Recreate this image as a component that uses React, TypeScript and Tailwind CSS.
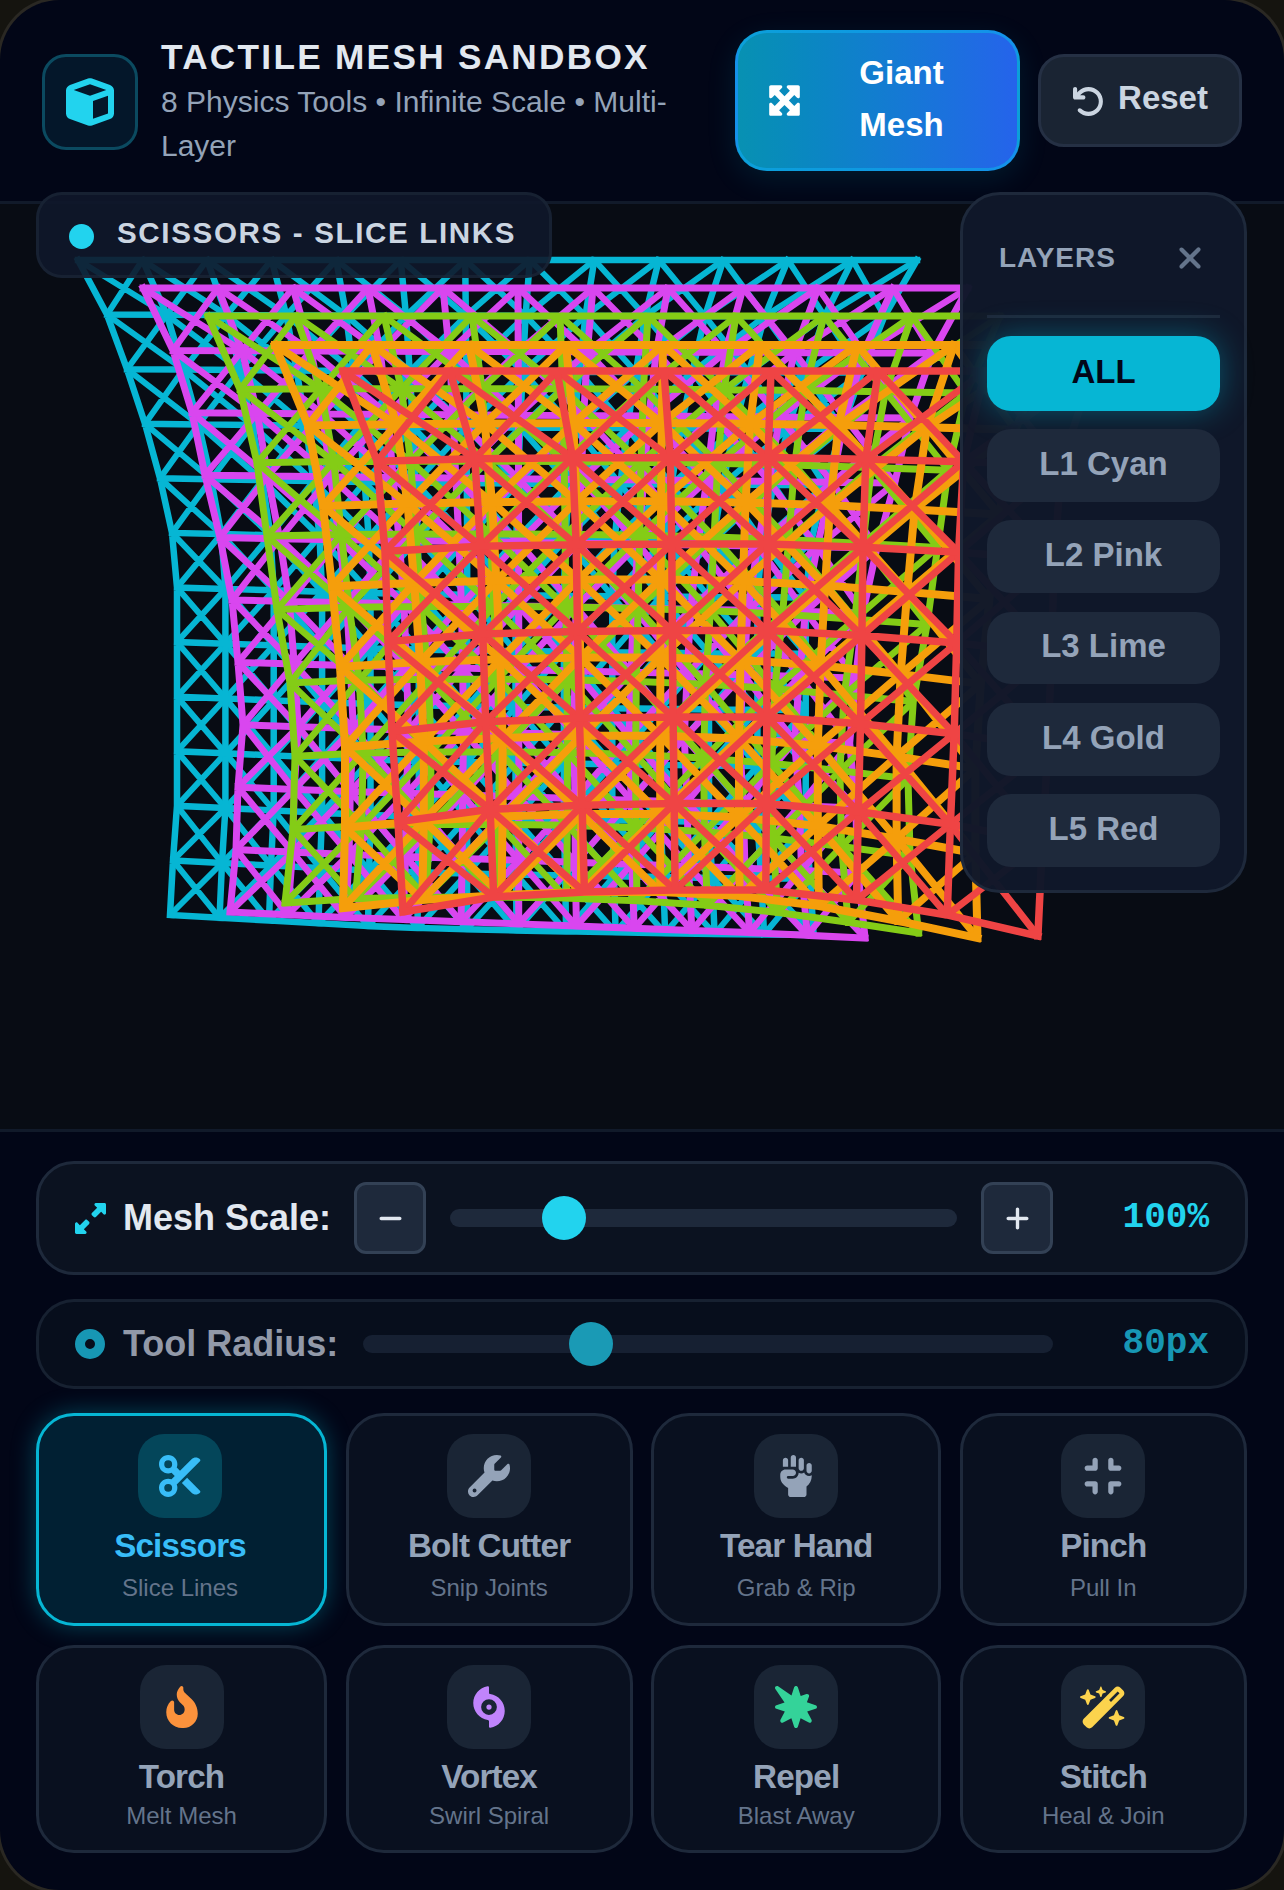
import React from 'react';
import {
  FaCube, FaMaximize, FaArrowRotateLeft, FaUpRightAndDownLeftFromCenter, FaScissors, FaWrench,
  FaHandFist, FaCompress, FaFireFlameCurved, FaBurst, FaHurricane, FaWandMagicSparkles, FaXmark, FaMinus, FaPlus,
} from 'react-icons/fa6';

interface MeshLayer {
  color: string;
  frame: number;
  brace: number;
  cols: number;
  x0: number;
  x1: number;
  y0: number;
  cx: number;
  left: number[];
  bottom: number[];
}

// measured off the picture: left edge per row, bottom edge per column fraction
const LAYERS: MeshLayer[] = [
  {
    color: '#06b6d4', frame: 6.5, brace: 6, cols: 13, x0: 78, x1: 917, y0: 260, cx: 473,
    left: [78, 107, 127, 145, 160, 172, 177, 177, 177, 177, 177, 173, 170],
    bottom: [915, 921, 927, 930, 932, 934, 935],
  },
  {
    color: '#d946ef', frame: 7, brace: 6.5, cols: 11, x0: 143, x1: 968, y0: 288, cx: 521,
    left: [143, 173, 192, 205, 220, 232, 238, 243, 238, 236, 230],
    bottom: [912, 917, 921, 925, 929, 933, 938],
  },
  {
    color: '#84cc16', frame: 7, brace: 6.5, cols: 9, x0: 208, x1: 1000, y0: 316, cx: 593,
    left: [208, 240, 257, 267, 277, 290, 295, 293, 285],
    bottom: [903, 898, 897, 897, 899, 903, 910, 921, 933],
  },
  {
    color: '#f59e0b', frame: 8, brace: 7.5, cols: 8, x0: 275, x1: 1051, y0: 345, cx: 648,
    left: [275, 308, 323, 332, 340, 345, 345, 343],
    bottom: [908, 900, 895, 892, 892, 896, 906, 921, 938],
  },
  {
    color: '#ef4444', frame: 7.5, brace: 7, cols: 7, x0: 343, x1: 1092, y0: 371, cx: 737,
    left: [343, 377, 385, 388, 392, 398, 403],
    bottom: [912, 897, 892, 890, 890, 900, 915, 936],
  },
];

function sample(values: number[], t: number) {
  const p = t * (values.length - 1);
  const i = Math.min(Math.floor(p), values.length - 2);
  return values[i] + (values[i + 1] - values[i]) * (p - i);
}

function meshPaths(layer: MeshLayer) {
  const rows = layer.left.length - 1;
  const node = (c: number, r: number) => {
    const u = c / layer.cols;
    const rest = layer.x0 + (layer.x1 - layer.x0) * u;
    const s = (layer.left[r] - layer.cx) / (layer.x0 - layer.cx);
    const x = layer.cx + (rest - layer.cx) * s;
    const y = layer.y0 + (sample(layer.bottom, u) - layer.y0) * (r / rows);
    return `${x.toFixed(1)} ${y.toFixed(1)}`;
  };
  let frame = '';
  let brace = '';
  for (let r = 0; r <= rows; r++) {
    for (let c = 0; c <= layer.cols; c++) {
      if (c < layer.cols) frame += `M${node(c, r)}L${node(c + 1, r)}`;
      if (r < rows) frame += `M${node(c, r)}L${node(c, r + 1)}`;
      if (c < layer.cols && r < rows) {
        brace += `M${node(c, r)}L${node(c + 1, r + 1)}`;
        brace += `M${node(c + 1, r)}L${node(c, r + 1)}`;
      }
    }
  }
  return { frame, brace };
}

function Mesh() {
  return (
    <svg className="absolute inset-0 block" width="1284" height="925" viewBox="0 204 1284 925" fill="none">
      {LAYERS.map((layer) => {
        const { frame, brace } = meshPaths(layer);
        return (
          <g key={layer.color} stroke={layer.color}>
            <path d={brace} strokeWidth={layer.brace} />
            <path d={frame} strokeWidth={layer.frame} strokeLinecap="square" />
          </g>
        );
      })}
    </svg>
  );
}

const layerButtons = ['L1 Cyan', 'L2 Pink', 'L3 Lime', 'L4 Gold', 'L5 Red'];

function LayersPanel() {
  return (
    <div className="absolute right-[37px] top-[-12px] w-[287px] h-[701px] rounded-[40px] border-[3px] border-[#1e293b] bg-[#0f172a]/[0.98] px-[24px] pt-[26px]">
      <div className="flex items-center justify-between h-[74px] pl-[12px] pr-[13px] mb-[20px]">
        <span className="text-[28px] font-bold tracking-[0.035em] text-[#94a3b8]">LAYERS</span>
        <FaXmark className="text-[#64748b] text-[34px]" />
      </div>
      <div className="h-[3px] bg-[#1e293b] mb-[18px]" />
      <div className="flex flex-col gap-[18.5px]">
        <button className="h-[74.5px] pb-[4px] rounded-[24px] bg-[#06b6d4] text-[33px] font-bold text-[#020617] shadow-[0_0_32px_rgba(6,182,212,0.4)]">ALL</button>
        {layerButtons.map((label) => (
          <button key={label} className="h-[72.8px] pb-[4px] rounded-[24px] bg-[#1e293b] text-[33px] font-bold text-[#94a3b8]">{label}</button>
        ))}
      </div>
    </div>
  );
}

interface Tool {
  name: string;
  hint: string;
  icon: React.ReactNode;
  active?: boolean;
}

const tools: Tool[] = [
  { name: 'Scissors', hint: 'Slice Lines', icon: <FaScissors className="text-[#38bdf8]" />, active: true },
  { name: 'Bolt Cutter', hint: 'Snip Joints', icon: <FaWrench className="text-[#94a3b8]" /> },
  { name: 'Tear Hand', hint: 'Grab & Rip', icon: <FaHandFist className="text-[#94a3b8]" /> },
  { name: 'Pinch', hint: 'Pull In', icon: <FaCompress className="text-[#94a3b8]" /> },
  { name: 'Torch', hint: 'Melt Mesh', icon: <FaFireFlameCurved className="text-[#fb923c]" /> },
  { name: 'Vortex', hint: 'Swirl Spiral', icon: <FaHurricane className="text-[#c084fc]" /> },
  { name: 'Repel', hint: 'Blast Away', icon: <FaBurst className="text-[#34d399]" /> },
  { name: 'Stitch', hint: 'Heal & Join', icon: <FaWandMagicSparkles className="text-[#fcd34d] text-[47px]" /> },
];

function ToolCard({ tool, lower }: { tool: Tool; lower: boolean }) {
  return (
    <button
      className={
        tool.active
          ? 'flex flex-col items-center pt-[18px] pr-[3px] rounded-[38px] border-[3px] border-[#06b6d4] bg-[#012033] shadow-[0_0_24px_rgba(6,182,212,0.35)]'
          : lower
            ? 'flex flex-col items-center pt-[17px] rounded-[38px] border-[3px] border-[#1e293b] bg-[#09101f]'
            : 'flex flex-col items-center pt-[18px] rounded-[38px] border-[3px] border-[#1e293b] bg-[#09101f]'
      }
    >
      <span
        className={
          tool.active
            ? 'flex items-center justify-center w-[84px] h-[84px] rounded-[26px] text-[42px] bg-[#04465a]'
            : 'flex items-center justify-center w-[84px] h-[84px] rounded-[26px] text-[42px] bg-[#1a2535]'
        }
      >
        {tool.icon}
      </span>
      <span className={tool.active ? 'mt-[4px] text-[33.2px] leading-[48px] font-bold tracking-[-0.025em] text-[#38bdf8]' : 'mt-[4px] text-[33.2px] leading-[48px] font-bold tracking-[-0.025em] text-[#94a3b8]'}>
        {tool.name}
      </span>
      <span className={lower ? 'mt-[-3px] text-[24px] leading-[36px] text-[#64748b]' : 'mt-0 text-[24px] leading-[36px] text-[#64748b]'}>{tool.hint}</span>
    </button>
  );
}

function StepButton({ children }: { children: React.ReactNode }) {
  return (
    <button className="flex items-center justify-center w-[72px] h-[72px] shrink-0 rounded-[12px] border-[3px] border-[#334155] bg-[#1e293b] text-[#e2e8f0] text-[27px]">
      {children}
    </button>
  );
}

export default function App() {
  return (
    <div className="w-[1284px] h-[1890px] overflow-hidden bg-[#15140f] font-['Liberation_Sans',sans-serif]">
      <div className="relative flex flex-col w-full h-full rounded-[60px] bg-[#020617] shadow-[0_0_0_3px_#2a2823]">
        {/* header */}
        <header className="flex items-center h-[204px] shrink-0 pl-[42px] pr-[42px] border-b-[3px] border-[#111a2a]">
          <div className="flex items-center justify-center w-[96px] h-[96px] mt-[2px] shrink-0 rounded-[24px] border-[3px] border-[#0b4a60] bg-[#04172a]">
            <FaCube className="text-[#22d3ee] text-[48px]" />
          </div>
          <div className="w-[597px] shrink-0 pl-[23px] pr-[40px]">
            <h1 className="text-[35.2px] leading-[46px] font-bold tracking-[0.065em] text-[#e2e8f0]">TACTILE MESH SANDBOX</h1>
            <p className="text-[30px] leading-[44px] text-[#94a3b8]">8 Physics Tools • Infinite Scale • Multi-Layer</p>
          </div>
          <button className="flex items-center w-[285px] h-[141px] shrink-0 pl-[29px] pr-[16px] rounded-[32px] border-[3px] border-[#0ea5e9]/70 bg-gradient-to-r from-[#0891b2] to-[#2563eb] text-white shadow-[0_8px_30px_rgba(6,182,212,0.12)]">
            <FaMaximize className="text-[35px] shrink-0" />
            <span className="flex-1 text-center text-[33px] leading-[52px] font-bold pb-[4px]">Giant<br />Mesh</span>
          </button>
          <button className="flex items-center justify-center gap-[13px] w-[204px] h-[93px] shrink-0 ml-[18px] rounded-[26px] border-[3px] border-[#253044] bg-[#1a2433] text-[33px] font-bold text-[#cbd5e1]">
            <FaArrowRotateLeft className="text-[33px] mt-[2px]" />
            <span className="pb-[6px]">Reset</span>
          </button>
        </header>

        {/* canvas */}
        <main className="relative flex-1 bg-[#080c14] border-b-[3px] border-[#111a2a]">
          <Mesh />
          <div className="absolute left-[36px] top-[-12px] flex items-center w-[516px] h-[86px] pl-[30px] rounded-[26px] border-[3px] border-[#1e293b]/60 bg-[#0f172a]/90">
            <span className="w-[25px] h-[25px] rounded-full bg-[#22d3ee] mt-[3px]" />
            <span className="ml-[23px] mb-[4px] text-[29.6px] font-bold tracking-[0.055em] text-[#cbd5e1]">SCISSORS - SLICE LINKS</span>
          </div>
          <LayersPanel />
        </main>

        {/* controls */}
        <section className="shrink-0 h-[758px] px-[36px] pt-[29px] flex flex-col">
          <div className="flex items-center h-[114px] rounded-[38px] border-[3px] border-[#1e293b] bg-[#0b1220] pl-[36px] pr-[36px]">
            <FaUpRightAndDownLeftFromCenter className="text-[#22d3ee] text-[31px] shrink-0" />
            <span className="ml-[17px] w-[231px] shrink-0 text-[36px] font-bold text-[#e2e8f0]">Mesh Scale:</span>
            <StepButton><FaMinus /></StepButton>
            <div className="relative flex-1 h-[18px] mx-[24px] rounded-full bg-[#1e293b]">
              <span className="absolute left-[92px] top-[-13px] w-[44px] h-[44px] rounded-full bg-[#22d3ee]" />
            </div>
            <StepButton><FaPlus /></StepButton>
            <span className="w-[156px] shrink-0 text-right font-['Liberation_Mono',monospace] text-[36px] font-bold text-[#22d3ee]">100%</span>
          </div>

          <div className="flex items-center h-[90px] mt-[24px] rounded-[38px] border-[3px] border-[#1e293b]/70 bg-[#070e1c] pl-[36px] pr-[36px]">
            <span className="w-[30px] h-[30px] shrink-0 rounded-full border-[10px] border-[#1797b4]" />
            <span className="ml-[18px] w-[240px] shrink-0 text-[36px] font-bold text-[#9299a8]">Tool Radius:</span>
            <div className="relative flex-1 h-[18px] rounded-full bg-[#162032]">
              <span className="absolute left-[206px] top-[-13px] w-[44px] h-[44px] rounded-full bg-[#1a9ab5]" />
            </div>
            <span className="w-[156px] shrink-0 text-right font-['Liberation_Mono',monospace] text-[36px] font-bold text-[#1797b4]">80px</span>
          </div>

          <div className="grid grid-cols-[291px_287px_290px_287px] grid-rows-[213px_208px] gap-x-[18.6px] gap-y-[19px] mt-[24px]">
            {tools.map((tool, i) => (
              <ToolCard key={tool.name} tool={tool} lower={i > 3} />
            ))}
          </div>
        </section>
      </div>
    </div>
  );
}
